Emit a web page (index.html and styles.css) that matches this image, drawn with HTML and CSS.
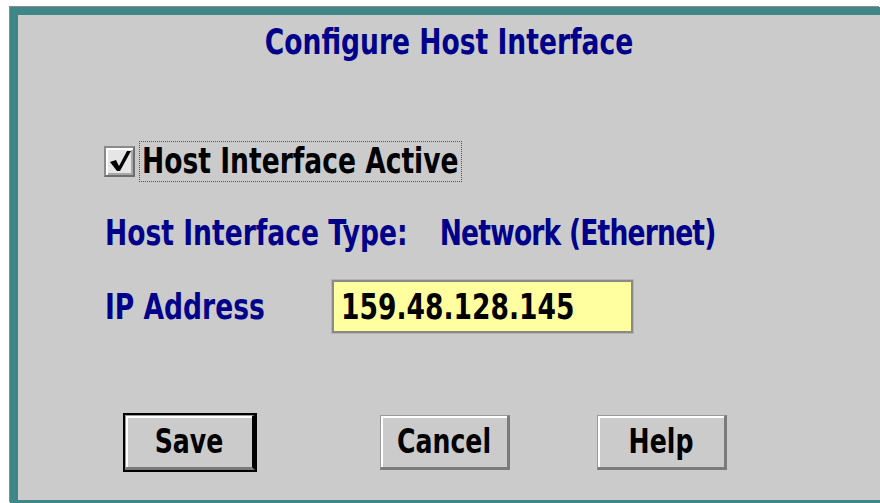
FILE: index.html
```html
<!DOCTYPE html>
<html lang="en">
<head>
<meta charset="utf-8">
<title>Configure Host Interface</title>
<link rel="stylesheet" href="styles.css">
</head>
<body>
<div class="desktop">
  <div class="frame">
    <div class="panel">
      <h1 class="title">Configure Host Interface</h1>

      <div class="row check-row">
        <span class="checkbox" aria-checked="true" role="checkbox">
          <svg viewBox="0 0 26 26" width="26" height="26" aria-hidden="true">
            <path d="M3 14 L9 12 L12 18 L20 3 L24 3 L13 23 L10 23 Z" fill="#000"/>
          </svg>
        </span>
        <span class="focus"><span class="label black">Host Interface Active</span></span>
      </div>

      <div class="row type-row">
        <span class="label navy">Host Interface Type:</span>
        <span class="label navy value">Network (Ethernet)</span>
      </div>

      <div class="row ip-row">
        <span class="label navy ip-label">IP Address</span>
        <span class="field"><span class="label black">159.48.128.145</span></span>
      </div>

      <div class="buttons">
        <button class="btn default"><span class="label">Save</span></button>
        <button class="btn cancel"><span class="label">Cancel</span></button>
        <button class="btn help"><span class="label">Help</span></button>
      </div>
    </div>
  </div>
</div>
</body>
</html>
```

FILE: styles.css
```css
* { box-sizing: border-box; }

html, body {
  margin: 0;
  padding: 0;
  background: #ffffff;
  width: 880px;
  height: 503px;
  overflow: hidden;
}

.desktop {
  padding: 7px 0 0 10px;
  height: 503px;
}

/* teal window frame on the top, left and bottom edges */
.frame {
  height: 496px;
  border-style: solid;
  border-color: #3f8787;
  border-width: 8px 0 3px 8px;
  box-shadow: -1px -1px 0 #8c8c8c;
  background: #cbcbcb;
}

.panel {
  height: 100%;
  background: #cbcbcb;
  padding: 0 0 0 87px;
  font-family: "DejaVu Sans Condensed", "DejaVu Sans", sans-serif;
  font-weight: bold;
}

.label {
  display: inline-block;
  font-size: 29.5px;
  line-height: 30px;
  transform: scaleY(1.2);
  white-space: nowrap;
}

.navy { color: #00008a; }
.black { color: #000; }

.title {
  margin: 0 0 0 -87px;
  padding-top: 11px;
  text-align: center;
  font-size: 29.5px;
  line-height: 30px;
  font-weight: bold;
  color: #00008a;
  transform: scaleY(1.2);
}

.row {
  display: flex;
  align-items: center;
}

.check-row {
  margin-top: 84px;
  height: 42px;
}

.checkbox {
  width: 31px;
  height: 31px;
  margin-left: -1px;
  border: 2px solid #8a8a8a;
  border-right-color: #6e6e6e;
  border-bottom-color: #6e6e6e;
  background: #e6e6e6;
  box-shadow: inset 2px 2px 0 #ffffff, inset -2px -2px 0 #a8a8a8;
  display: flex;
  align-items: center;
  justify-content: center;
}

.focus {
  margin-left: 4px;
  height: 41px;
  padding: 0 2px;
  border: 1px dotted #555;
  display: flex;
  align-items: center;
}

.type-row {
  margin-top: 31px;
  height: 40px;
}

.type-row .value {
  margin-left: 32px;
  letter-spacing: -0.8px;
}

.ip-row {
  margin-top: 27px;
  height: 53px;
}

.ip-label { width: 227px; }

/* pale yellow entry field */
.field {
  width: 301px;
  height: 53px;
  border: 2px solid #8a8a8a;
  box-shadow: 0 0 0 1px #b4b4b4;
  background: #ffffa0;
  padding-left: 7px;
  display: flex;
  align-items: center;
}

.buttons {
  margin-top: 82px;
  display: flex;
  padding-left: 20px;
}

.btn {
  width: 130px;
  height: 55px;
  margin: 0;
  padding: 0;
  background: #cbcbcb;
  font-family: inherit;
  font-weight: bold;
  color: #000;
  border: 1px solid #9a9a9a;
  border-right: 3px solid #7a7a7a;
  border-bottom: 3px solid #7a7a7a;
  box-shadow: inset 2px 2px 0 #ffffff;
  display: flex;
  align-items: center;
  justify-content: center;
}

.btn .label { font-size: 28px; }

.btn.default {
  outline: 2px solid #000;
  border-right-color: #000;
}

.btn.cancel { margin-left: 125px; }
.btn.help { margin-left: 87px; }
```
